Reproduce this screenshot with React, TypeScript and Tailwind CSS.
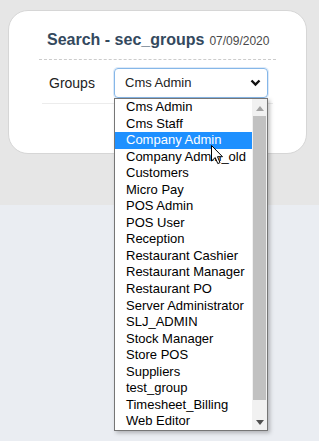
import React from 'react'

const GROUPS = [
  'Cms Admin',
  'Cms Staff',
  'Company Admin',
  'Company Admin_old',
  'Customers',
  'Micro Pay',
  'POS Admin',
  'POS User',
  'Reception',
  'Restaurant Cashier',
  'Restaurant Manager',
  'Restaurant PO',
  'Server Administrator',
  'SLJ_ADMIN',
  'Stock Manager',
  'Store POS',
  'Suppliers',
  'test_group',
  'Timesheet_Billing',
  'Web Editor',
]

const SELECTED = 2

function Chevron() {
  return (
    <svg width="11" height="8" viewBox="0 0 11 8" className="shrink-0">
      <path d="M1.5 1.5 L5.5 5.5 L9.5 1.5" fill="none" stroke="#111" strokeWidth="2.4" />
    </svg>
  )
}

function Cursor() {
  return (
    <svg width="13" height="20" viewBox="0 0 13 20" className="absolute left-[211px] top-[145px]">
      <path
        d="M0.5 0.5 L0.5 16 L4.2 12.6 L6.8 18.6 L9 17.6 L6.5 11.7 L11.5 11.7 Z"
        fill="#fff"
        stroke="#000"
        strokeWidth="1"
        strokeLinejoin="round"
      />
    </svg>
  )
}

function Dropdown() {
  return (
    <div className="absolute left-[114px] top-[98px] w-[154px] h-[333px] border border-[#767676] bg-white flex shadow-[2px_2px_4px_rgba(0,0,0,0.25)]">
      <div className="flex-1 flex flex-col">
        {GROUPS.map((g, i) => (
          <div
            key={g}
            className={
              i === SELECTED
                ? 'h-[16.55px] leading-[16.55px] pl-[11px] bg-[#1e90ff] text-white whitespace-nowrap overflow-hidden'
                : 'h-[16.55px] leading-[16.55px] pl-[11px] text-black whitespace-nowrap overflow-hidden'
            }
          >
            {g}
          </div>
        ))}
      </div>
      {/* scrollbar */}
      <div className="w-[15px] bg-[#f1f1f1] flex flex-col items-center">
        <div className="h-[17px] flex items-center justify-center pt-[2px]">
          <svg width="8" height="5" viewBox="0 0 8 5">
            <path d="M0 5 L4 0 L8 5 Z" fill="#a3a3a3" />
          </svg>
        </div>
        <div className="w-[13px] h-[284px] bg-[#c1c1c1]" />
        <div className="flex-1 flex items-end justify-center pb-[5px]">
          <svg width="8" height="5" viewBox="0 0 8 5">
            <path d="M0 0 L8 0 L4 5 Z" fill="#505050" />
          </svg>
        </div>
      </div>
    </div>
  )
}

export default function App() {
  return (
    <div className="relative min-h-screen bg-[#eaedf2] text-[13px] font-['Liberation_Sans',Arial,sans-serif]">
      <div className="h-[205px] bg-[#e6e6e6] pt-[10px] pl-[8px]">
        <div className="w-[299px] h-[144px] bg-white rounded-[20px] border border-[#d6d6d6] px-[30px] pt-[17px]">
          <div className="flex items-baseline gap-[5px] pl-[8px] pb-[7px] border-b border-dashed border-[#cccccc]">
            <span className="text-[16px] font-bold text-[#34495e]">Search - sec_groups</span>
            <span className="text-[12px] text-[#4a4a4a]">07/09/2020</span>
          </div>
          <div className="flex items-center ml-[3px] mr-[3px] mt-[8px] pb-[5px] border-b border-[#ececec]">
            <span className="w-[72px] pl-[7px] text-[14px] text-[#222]">Groups</span>
            <div className="w-[154px] h-[30px] rounded-[4px] border border-[#86b7e8] flex items-center justify-between pl-[10px] pr-[6px] text-[13px] text-[#222] shadow-[0_0_0_1px_rgba(120,170,230,0.25)]">
              <span>Cms Admin</span>
              <Chevron />
            </div>
          </div>
        </div>
      </div>
      <Dropdown />
      <Cursor />
    </div>
  )
}
